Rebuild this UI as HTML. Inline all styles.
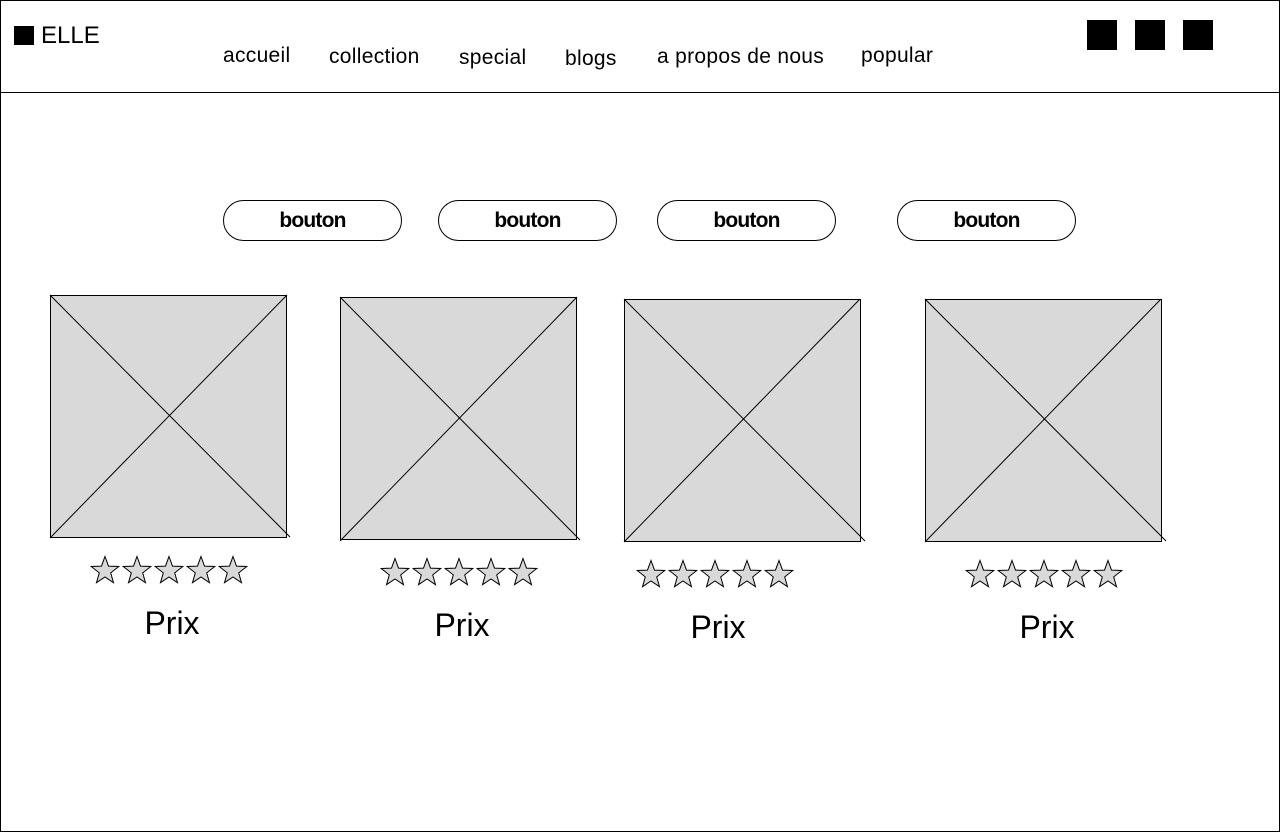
<!DOCTYPE html>
<html><head><meta charset="utf-8"><style>
*{margin:0;padding:0;box-sizing:border-box}
body{width:1280px;height:832px;background:#fff;position:relative;overflow:hidden;font-family:"Liberation Sans",sans-serif;color:#000}
.frame{position:absolute;left:0;top:0;width:1280px;height:832px;border:1px solid #000}
.hl{position:absolute;left:0;top:92px;width:1280px;height:1px;background:#000}
.a{position:absolute;white-space:nowrap}
.nav{font-size:21px;line-height:24px;letter-spacing:0.3px}
.sq{position:absolute;background:#000}
.btn{position:absolute;width:179px;height:41px;border:1px solid #000;border-radius:21px;font-weight:bold;font-size:21px;text-align:center;line-height:39px;letter-spacing:-0.8px}
.img{position:absolute}
.prix{position:absolute;font-size:32px;line-height:36px;width:200px;text-align:center}
</style></head><body>
<div class="frame"></div>
<div class="hl"></div>
<div class="sq" style="left:14px;top:26px;width:20px;height:19px"></div>
<div class="a" style="left:41px;top:21px;font-size:24px;line-height:30px">ELLE</div>
<div class="a nav" style="left:223px;top:44px">accueil</div>
<div class="a nav" style="left:329px;top:45px">collection</div>
<div class="a nav" style="left:459px;top:46px">special</div>
<div class="a nav" style="left:565px;top:47px">blogs</div>
<div class="a nav" style="left:657px;top:45px">a propos de nous</div>
<div class="a nav" style="left:861px;top:44px">popular</div>
<div class="sq" style="left:1087px;top:20px;width:30px;height:30px"></div>
<div class="sq" style="left:1135px;top:20px;width:30px;height:30px"></div>
<div class="sq" style="left:1183px;top:20px;width:30px;height:30px"></div>
<div class="btn" style="left:223px;top:200px">bouton</div>
<div class="btn" style="left:438px;top:200px">bouton</div>
<div class="btn" style="left:657px;top:200px">bouton</div>
<div class="btn" style="left:897px;top:200px">bouton</div>

<svg class="img" style="left:0;top:0" width="1280" height="832">
<defs>
<polygon id="st" points="15,1.5 18.5,11.1 28.8,11.5 20.7,17.9 23.5,27.7 15,22 6.5,27.7 9.3,17.9 1.2,11.5 11.5,11.1" fill="#d9d9d9" stroke="#000" stroke-width="1"/>
<g id="stars"><use href="#st" x="0"/><use href="#st" x="32"/><use href="#st" x="64"/><use href="#st" x="96"/><use href="#st" x="128"/></g>
</defs>
<g stroke="#000" stroke-width="1" fill="#d9d9d9">
<rect x="50.5" y="295.5" width="236" height="242"/>
<line x1="50" y1="295" x2="290" y2="537"/><line x1="287" y1="295" x2="50" y2="538"/>
<rect x="340.5" y="297.5" width="236" height="242"/>
<line x1="340" y1="297" x2="580" y2="540"/><line x1="577" y1="297" x2="340" y2="541"/>
<rect x="624.5" y="299.5" width="236" height="242"/>
<line x1="624" y1="299" x2="865" y2="541"/><line x1="860" y1="299" x2="624" y2="542"/>
<rect x="925.5" y="299.5" width="236" height="242"/>
<line x1="925" y1="299" x2="1166" y2="541"/><line x1="1161" y1="299" x2="925" y2="542"/>
</g>
<use href="#stars" x="90" y="555"/>
<use href="#stars" x="380" y="557"/>
<use href="#stars" x="636" y="559"/>
<use href="#stars" x="965" y="559"/>
</svg>
<div class="prix" style="left:72px;top:605px">Prix</div>
<div class="prix" style="left:362px;top:607px">Prix</div>
<div class="prix" style="left:618px;top:609px">Prix</div>
<div class="prix" style="left:947px;top:609px">Prix</div>
</body></html>
